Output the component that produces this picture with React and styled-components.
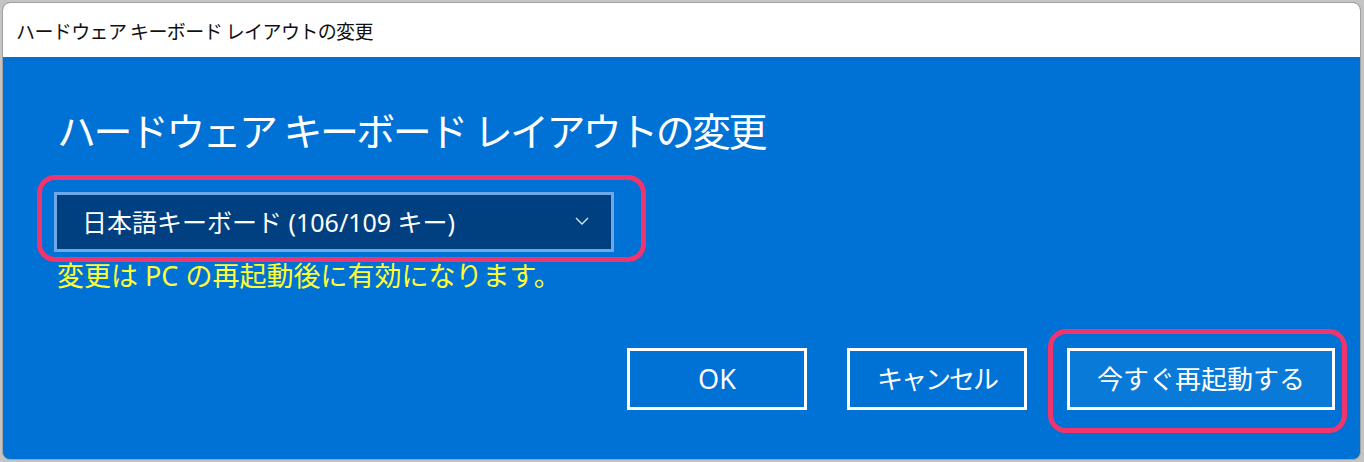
import React from "react";
import styled, { createGlobalStyle } from "styled-components";

const Global = createGlobalStyle`
  html, body { margin: 0; padding: 0; }
  body {
    background: #c4c4c4;
    width: 1364px;
    height: 462px;
    overflow: hidden;
    font-family: "Noto Sans", "Noto Sans CJK JP", sans-serif;
  }
`;

const Window = styled.div`
  position: relative;
  margin: 2px 0 0 2px;
  width: 1359px;
  height: 458px;
  box-sizing: border-box;
  border: 1px solid #a2a2a2;
  border-radius: 8px;
  overflow: hidden;
  display: flex;
  flex-direction: column;
  background: #0072d5;
`;

const TitleBar = styled.div`
  height: 54px;
  flex: none;
  background: #ffffff;
  display: flex;
  align-items: center;
  padding-left: 13px;
  font-family: "Noto Sans CJK JP", sans-serif;
  font-size: 19px;
  letter-spacing: -0.6px;
  word-spacing: 0px;
  color: #111;
`;

const Body = styled.div`
  flex: 1;
  display: flex;
  flex-direction: column;
  padding: 0 25px 49px 51px;
`;

const Heading = styled.h1`
  margin: 49px 0 0 3px;
  font-family: "Noto Sans CJK JP", sans-serif;
  font-weight: 400;
  font-size: 39px;
  line-height: 46px;
  letter-spacing: -2.6px;
  word-spacing: 2px;
  color: #ffffff;
`;

const Annotated = styled.div`
  position: relative;
  align-self: flex-start;
  margin-top: ${(p) => p.$mt || 0}px;
`;

const Highlight = styled.div`
  position: absolute;
  top: ${(p) => p.$t}px;
  left: ${(p) => p.$l}px;
  right: ${(p) => p.$r}px;
  bottom: ${(p) => p.$b}px;
  border: 5px solid #f0346e;
  border-radius: 18px;
  pointer-events: none;
`;

const Select = styled.div`
  width: 560px;
  height: 60px;
  box-sizing: border-box;
  border: 3px solid #6ea8e6;
  background: #004080;
  display: flex;
  align-items: center;
  justify-content: space-between;
  padding: 0 22px 2px 25px;
  color: #ffffff;
  font-size: 25px;
`;

const Notice = styled.div`
  margin: 8px 0 0 3px;
  font-size: 27px;
  line-height: 32px;
  color: #ffff33;
`;

const Buttons = styled.div`
  margin-top: auto;
  display: flex;
  justify-content: flex-end;
  gap: 40px;
`;

const Button = styled.button`
  width: ${(p) => p.$w}px;
  height: 62px;
  box-sizing: border-box;
  border: 3px solid #ffffff;
  background: ${(p) => (p.$focus ? "#0a7ad8" : "transparent")};
  color: #ffffff;
  font-family: "Noto Sans", "Noto Sans CJK JP", sans-serif;
  font-size: ${(p) => p.$fs || 26}px;
  letter-spacing: ${(p) => p.$ls || 0}px;
  padding: 0 0 2px;
  cursor: pointer;
`;

const Chevron = () => (
  <svg width="14" height="8" viewBox="0 0 14 8">
    <polyline points="1,1 7,7 13,1" fill="none" stroke="#d6e6f7" strokeWidth="1.4" />
  </svg>
);

export default function App() {
  return (
    <>
      <Global />
      <Window>
        <TitleBar>ハードウェア キーボード レイアウトの変更</TitleBar>
        <Body>
          <Heading>ハードウェア キーボード レイアウトの変更</Heading>
          <Annotated $mt={40}>
            <Select>
              <span>日本語キーボード (106/109 キー)</span>
              <Chevron />
            </Select>
            <Highlight $t={-17} $l={-17} $r={-32} $b={-10} />
          </Annotated>
          <Notice>変更は PC の再起動後に有効になります。</Notice>
          <Buttons>
            <Button $w={180} $fs={27}>OK</Button>
            <Button $w={180} $ls={-2}>キャンセル</Button>
            <Annotated>
              <Button $w={268} $focus>今すぐ再起動する</Button>
              <Highlight $t={-19} $l={-19} $r={-12} $b={-23} />
            </Annotated>
          </Buttons>
        </Body>
      </Window>
    </>
  );
}
